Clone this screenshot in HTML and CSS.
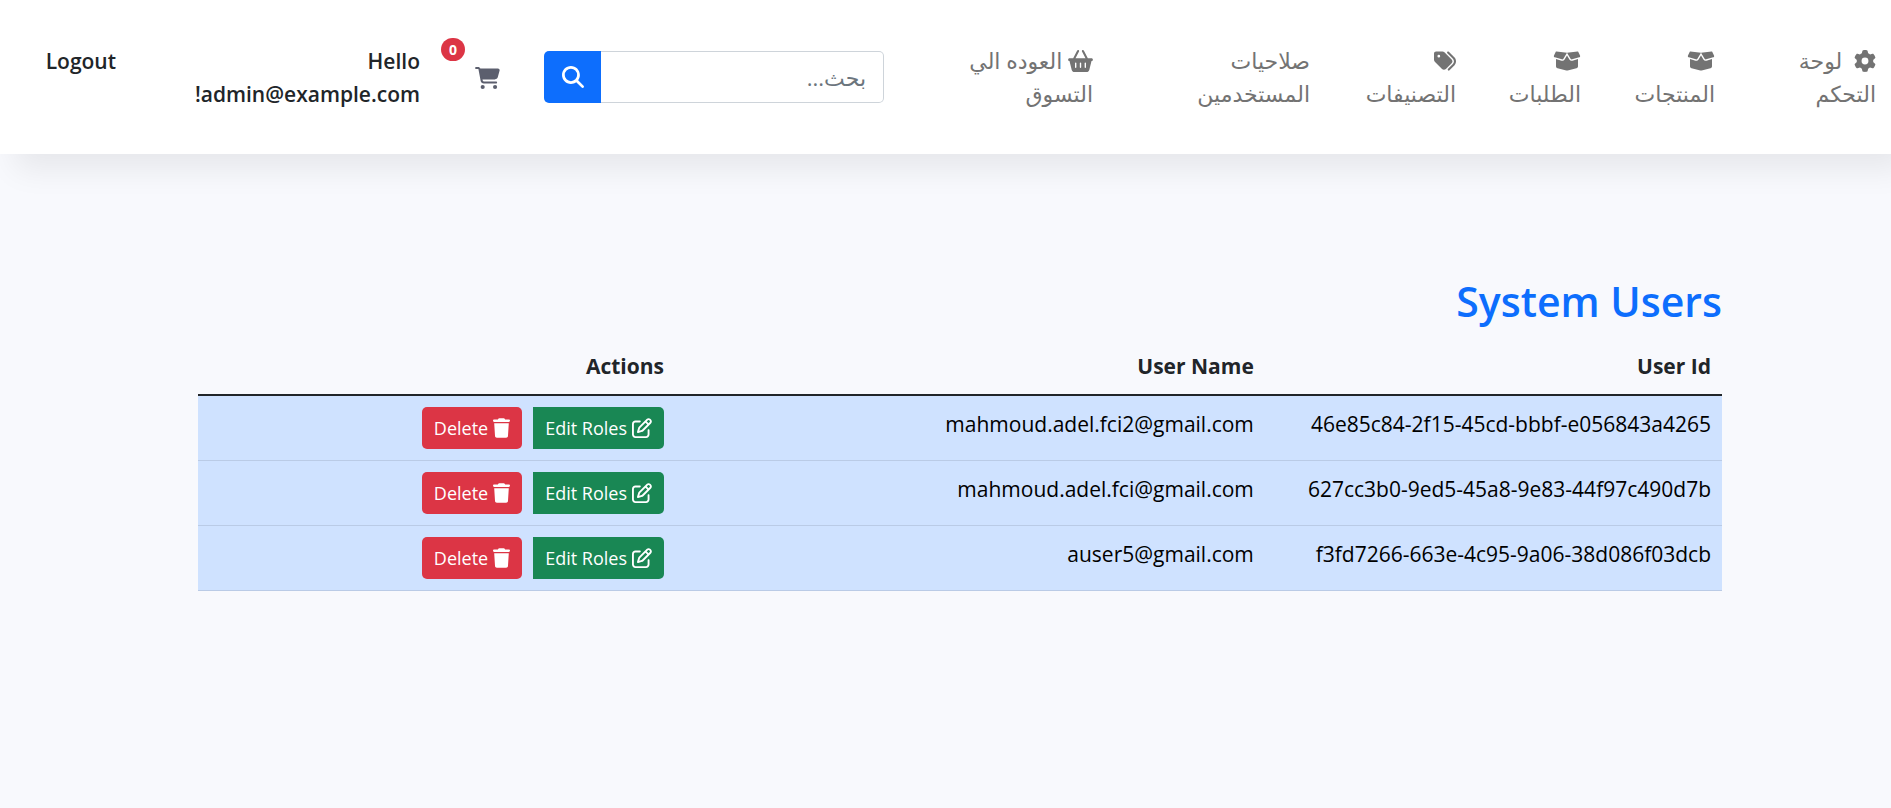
FILE: index.html
```html
<!DOCTYPE html>
<html lang="ar" dir="rtl">
<head>
<meta charset="utf-8">
<meta name="viewport" content="width=device-width, initial-scale=1">
<title>System Users</title>
<link rel="stylesheet" href="styles.css">
</head>
<body>
<svg class="sprite" aria-hidden="true">
  <symbol id="gear" viewBox="0 0 512 512"><path d="M495.9 166.6c3.200 8.700.5 18.400-6.400 24.600l-43.300 39.400c1.100 8.300 1.700 16.800 1.700 25.400s-.6 17.100-1.700 25.400l43.300 39.400c6.900 6.200 9.600 15.900 6.400 24.600c-4.400 11.900-9.700 23.300-15.800 34.300l-4.700 8.100c-6.600 11-14 21.400-22.100 31.200c-5.900 7.200-15.700 9.600-24.500 6.800l-55.700-17.700c-13.400 10.300-28.200 18.900-44 25.400l-12.500 57.100c-2 9.100-9 16.300-18.200 17.800c-13.800 2.300-28 3.500-42.500 3.500s-28.700-1.200-42.500-3.500c-9.200-1.500-16.200-8.700-18.200-17.800l-12.500-57.100c-15.800-6.500-30.600-15.100-44-25.400L83.100 425.900c-8.800 2.800-18.600.3-24.500-6.800c-8.100-9.800-15.500-20.200-22.100-31.200l-4.700-8.100c-6.100-11-11.400-22.400-15.800-34.300c-3.200-8.700-.5-18.400 6.400-24.600l43.300-39.400C64.600 273.100 64 264.600 64 256s.6-17.100 1.700-25.400L22.400 191.200c-6.900-6.200-9.600-15.900-6.400-24.600c4.400-11.900 9.700-23.300 15.800-34.300l4.700-8.100c6.600-11 14-21.400 22.100-31.200c5.900-7.200 15.700-9.600 24.500-6.800l55.700 17.700c13.400-10.300 28.200-18.900 44-25.400l12.500-57.100c2-9.100 9-16.300 18.200-17.800C227.300 1.200 241.500 0 256 0s28.700 1.200 42.500 3.500c9.200 1.500 16.200 8.700 18.200 17.800l12.500 57.100c15.800 6.500 30.600 15.100 44 25.400l55.700-17.700c8.800-2.800 18.600-.3 24.500 6.800c8.100 9.800 15.500 20.200 22.100 31.200l4.700 8.100c6.100 11 11.400 22.400 15.800 34.300zM256 336a80 80 0 1 0 0-160 80 80 0 1 0 0 160z"/></symbol>
  <symbol id="box" viewBox="0 0 640 512"><path d="M58.900 42.100c3-6.100 9.600-9.600 16.300-8.700L320 64 564.800 33.400c6.700-.8 13.300 2.700 16.300 8.700l41.700 83.400c9 17.900-.6 39.600-19.800 45.100L439.600 217.300c-13.900 4-28.800-1.900-36.200-14.300L320 64 236.600 203c-7.400 12.400-22.300 18.300-36.200 14.300L37.100 170.600c-19.300-5.500-28.800-27.200-19.800-45.100L58.900 42.100zM321.100 128l54.900 91.400c14.900 24.800 44.600 36.600 72.500 28.600L576 211.600v167c0 22-15 41.200-36.400 46.600l-204.100 51c-10.200 2.600-20.900 2.600-31 0l-204.100-51C79 419.700 64 400.500 64 378.500v-167L191.600 248c27.800 8 57.600-3.800 72.500-28.600L318.900 128h2.200z"/></symbol>
  <symbol id="tags" viewBox="0 0 512 512"><path d="M345 39.100L472.800 168.400c52.400 53 52.400 138.200 0 191.200L360.800 472.900c-9.300 9.400-24.500 9.500-33.900.2s-9.500-24.500-.2-33.900L438.600 325.900c33.900-34.300 33.900-89.400 0-123.700L310.900 72.900c-9.300-9.400-9.200-24.600.2-33.900s24.600-9.200 33.900.2zM0 229.500V80C0 53.500 21.500 32 48 32h149.500c17 0 33.300 6.700 45.300 18.700l168 168c25 25 25 65.500 0 90.500L277.300 442.700c-25 25-65.500 25-90.500 0l-168-168C6.700 262.700 0 246.500 0 229.500zM144 144a32 32 0 1 0-64 0 32 32 0 1 0 64 0z"/></symbol>
  <symbol id="basket" viewBox="0 0 576 512"><path d="M253.300 35.100c6.100-11.800 1.500-26.300-10.200-32.400s-26.300-1.500-32.400 10.200L117.600 192H32c-17.700 0-32 14.300-32 32s14.300 32 32 32L83.900 463.500C91 492 116.600 512 146 512h284c29.400 0 55-20 62.100-48.500L544 256c17.700 0 32-14.300 32-32s-14.300-32-32-32h-85.600L365.300 12.900C359.200 1.200 344.700-3.400 332.900 2.700s-16.300 20.600-10.200 32.400L404.300 192H171.700L253.300 35.100zM192 304v96c0 8.800-7.200 16-16 16s-16-7.200-16-16v-96c0-8.800 7.200-16 16-16s16 7.200 16 16zm96-16c8.800 0 16 7.200 16 16v96c0 8.800-7.200 16-16 16s-16-7.200-16-16v-96c0-8.800 7.200-16 16-16zm128 16v96c0 8.800-7.200 16-16 16s-16-7.200-16-16v-96c0-8.800 7.200-16 16-16s16 7.200 16 16z"/></symbol>
  <symbol id="search" viewBox="0 0 512 512"><path d="M416 208c0 45.900-14.900 88.300-40 122.700L502.600 457.400c12.500 12.500 12.500 32.800 0 45.300s-32.800 12.500-45.300 0L330.700 376c-34.400 25.200-76.800 40-122.700 40C93.100 416 0 322.900 0 208S93.100 0 208 0s208 93.100 208 208zM208 352a144 144 0 1 0 0-288 144 144 0 1 0 0 288z"/></symbol>
  <symbol id="cart" viewBox="0 0 576 512"><path d="M0 24C0 10.700 10.700 0 24 0h45.500c22 0 41.500 12.800 50.600 32h411c26.300 0 45.500 25 38.600 50.400l-41 152.300c-8.500 31.400-37 53.300-69.500 53.300H170.700l5.400 28.500c2.200 11.300 12.100 19.500 23.600 19.500H488c13.300 0 24 10.700 24 24s-10.700 24-24 24H199.700c-34.600 0-64.300-24.600-70.700-58.500L77.400 54.500c-.7-3.800-4-6.500-7.900-6.500H24C10.700 48 0 37.300 0 24zM128 464a48 48 0 1 1 96 0 48 48 0 1 1-96 0zm336-48a48 48 0 1 1 0 96 48 48 0 1 1 0-96z"/></symbol>
  <symbol id="edit" viewBox="0 0 512 512"><path d="M441 58.900L453.100 71c9.400 9.400 9.400 24.600 0 33.900L424 134.100 377.900 88 407 58.900c9.400-9.400 24.600-9.400 33.900 0zM209.800 256.200L344 121.900 390.100 168 255.800 302.200c-2.900 2.900-6.500 5-10.400 6.100l-58.500 16.700 16.700-58.500c1.100-3.900 3.200-7.500 6.100-10.400zM373.100 25L175.800 222.200c-8.700 8.700-15 19.400-18.300 31.100l-28.600 100c-2.400 8.400-.1 17.400 6.100 23.600s15.200 8.500 23.600 6.100l100-28.600c11.800-3.400 22.500-9.700 31.100-18.300L487 138.900c28.100-28.100 28.100-73.700 0-101.800L474.900 25C446.800-3.100 401.200-3.100 373.100 25zM88 64C39.400 64 0 103.400 0 152v272c0 48.600 39.400 88 88 88h272c48.600 0 88-39.400 88-88V312c0-13.300-10.700-24-24-24s-24 10.700-24 24v112c0 22.100-17.900 40-40 40H88c-22.100 0-40-17.900-40-40V152c0-22.100 17.900-40 40-40h112c13.300 0 24-10.700 24-24s-10.700-24-24-24H88z"/></symbol>
  <symbol id="trash" viewBox="0 0 448 512"><path d="M135.200 17.700L128 32H32C14.300 32 0 46.300 0 64s14.300 32 32 32h384c17.700 0 32-14.300 32-32s-14.300-32-32-32h-96l-7.200-14.300C307.400 6.800 296.300 0 284.200 0H163.800c-12.100 0-23.200 6.800-28.600 17.700zM416 128H32l21.200 339c1.600 25.300 22.600 45 47.900 45h245.800c25.300 0 46.300-19.700 47.900-45L416 128z"/></symbol>
</svg>

<nav class="navbar">
  <a class="nav-link" href="#"><svg class="icon icon-gear"><use href="#gear"/></svg> لوحة<br>التحكم</a>
  <a class="nav-link" href="#"><svg class="icon icon-box"><use href="#box"/></svg><br>المنتجات</a>
  <a class="nav-link" href="#"><svg class="icon icon-box"><use href="#box"/></svg><br>الطلبات</a>
  <a class="nav-link" href="#"><svg class="icon"><use href="#tags"/></svg><br>التصنيفات</a>
  <a class="nav-link" href="#">صلاحيات<br>المستخدمين</a>
  <a class="nav-link" href="#"><svg class="icon icon-basket"><use href="#basket"/></svg> العوده الي<br>التسوق</a>
  <form class="search">
    <input class="search-input" type="search" placeholder="بحث..." aria-label="بحث">
    <button class="search-button" type="button" aria-label="بحث"><svg class="icon"><use href="#search"/></svg></button>
  </form>
  <a class="cart" href="#" aria-label="Cart"><svg class="icon icon-cart"><use href="#cart"/></svg><span class="badge">0</span></a>
  <a class="account" href="#">Hello<br>admin@example.com!</a>
  <button class="logout" type="button">Logout</button>
</nav>

<main class="container">
  <h1 class="title">System Users</h1>
  <table class="users">
    <colgroup><col class="col-id"><col class="col-name"><col></colgroup>
    <thead>
      <tr><th scope="col">User Id</th><th scope="col">User Name</th><th scope="col">Actions</th></tr>
    </thead>
    <tbody>
      <tr>
        <td>46e85c84-2f15-45cd-bbbf-e056843a4265</td>
        <td>mahmoud.adel.fci2@gmail.com</td>
        <td><div class="actions"><a class="btn btn-edit" href="#"><svg class="icon-edit"><use href="#edit"/></svg>Edit Roles</a><button class="btn btn-delete" type="button"><svg class="icon-trash"><use href="#trash"/></svg>Delete</button></div></td>
      </tr>
      <tr>
        <td>627cc3b0-9ed5-45a8-9e83-44f97c490d7b</td>
        <td>mahmoud.adel.fci@gmail.com</td>
        <td><div class="actions"><a class="btn btn-edit" href="#"><svg class="icon-edit"><use href="#edit"/></svg>Edit Roles</a><button class="btn btn-delete" type="button"><svg class="icon-trash"><use href="#trash"/></svg>Delete</button></div></td>
      </tr>
      <tr>
        <td>f3fd7266-663e-4c95-9a06-38d086f03dcb</td>
        <td>auser5@gmail.com</td>
        <td><div class="actions"><a class="btn btn-edit" href="#"><svg class="icon-edit"><use href="#edit"/></svg>Edit Roles</a><button class="btn btn-delete" type="button"><svg class="icon-trash"><use href="#trash"/></svg>Delete</button></div></td>
      </tr>
    </tbody>
  </table>
</main>
</body>
</html>
```
FILE: styles.css
```css
* { box-sizing: border-box; }

body {
  margin: 0;
  background: #f8f9fd;
  color: #212529;
  font-family: "Segoe UI", "Open Sans", "Noto Sans", "DejaVu Sans", sans-serif;
  font-size: 21px;
  line-height: 33px;
}

a { color: inherit; text-decoration: none; }

.sprite { position: absolute; width: 0; height: 0; }

.icon {
  width: 22px;
  height: 22px;
  fill: currentColor;
  vertical-align: -3px;
}
.icon-gear { margin-inline-end: 6px; }
.icon-box { width: 28px; }
.icon-basket { width: 25px; }
.icon-cart { width: 25px; display: block; }

.navbar {
  display: grid;
  grid-template-columns: 161fr 134fr 125fr 146fr 217fr 209fr 384fr 80fr 304fr 116fr;
  align-items: start;
  padding: 44px 15px 43px 0;
  background: #fff;
  box-shadow: 15px 15px 30px rgba(0, 0, 0, .075);
}
.navbar > * { min-width: 0; }

.nav-link { color: #737373; font-size: 22px; white-space: nowrap; }

.search { display: flex; margin-top: 7px; margin-inline-end: 44px; }
.search-input {
  flex: 1;
  min-width: 0;
  height: 52px;
  padding: 0 17px;
  border: 1px solid #ced4da;
  border-inline-end: 0;
  border-radius: 0 5px 5px 0;
  background: #fff;
  font: inherit;
  font-size: 22px;
}
.search-input::placeholder { color: #6c757d; opacity: 1; }
.search-button {
  width: 57px;
  padding: 0;
  border: 0;
  border-radius: 5px 0 0 5px;
  background: #0d6efd;
  color: #fff;
}

.cart {
  position: relative;
  justify-self: start;
  margin-top: 23px;
  color: #5c5f6e;
}
.badge {
  position: absolute;
  right: 35px;
  bottom: 28px;
  padding: 0 8px;
  border-radius: 12px;
  background: #dc3545;
  color: #fff;
  font-size: 14px;
  font-weight: 700;
  line-height: 23px;
}

.account, .logout {
  margin-top: 1px;
  font-size: 21px;
  font-weight: 600;
  white-space: nowrap;
}
.logout {
  justify-self: start;
  padding: 0;
  border: 0;
  background: none;
  color: inherit;
  font-family: inherit;
  line-height: inherit;
}

.container { padding: 121px 169px 0 198px; }

.title {
  margin: 0 0 11px;
  color: #0d6efd;
  font-size: 41px;
  font-weight: 600;
  line-height: 53px;
}

.users { width: 100%; border-collapse: collapse; table-layout: fixed; }
.col-id { width: 30%; }
.col-name { width: 38.7%; }
.users th, .users td { padding: 11px; text-align: start; vertical-align: top; }
.users th { font-weight: 700; }
.users thead { border-bottom: 2px solid #212529; }
.users tbody tr { background: #cfe2ff; border-bottom: 1px solid #bacbe6; }
.users tbody td { color: #000; line-height: 35px; }

.actions { display: flex; gap: 11px; }
.btn {
  display: flex;
  align-items: center;
  gap: 5px;
  height: 42px;
  padding: 0 12px;
  border: 0;
  color: #fff;
  font: inherit;
  font-size: 18px;
}
.btn svg { height: 20px; fill: currentColor; }
.btn-edit { border-radius: 0 5px 5px 0; background: #198754; }
.btn-delete { border-radius: 5px; background: #dc3545; }
.icon-edit { width: 20px; }
.icon-trash { width: 17px; }
```
